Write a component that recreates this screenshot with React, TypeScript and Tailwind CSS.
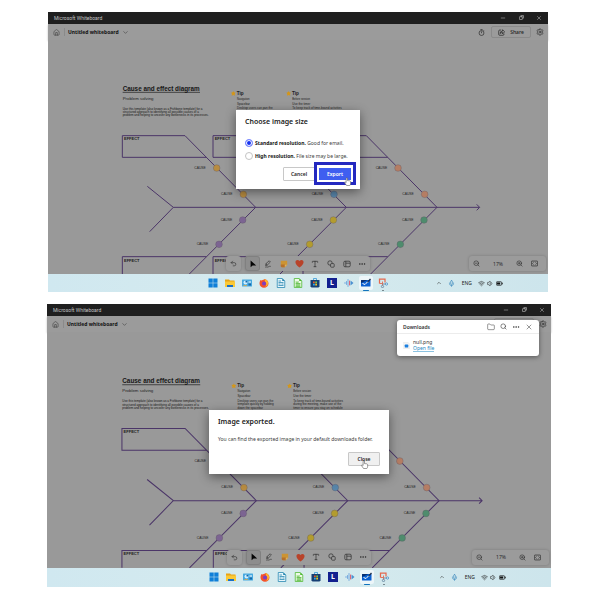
import type { ReactNode } from "react";
import {
  ChevronDown,
  ChevronUp,
  Copy,
  Ellipsis,
  Folder,
  House,
  Mic,
  Minus,
  Search,
  Settings,
  Type,
  Undo2,
  Volume1,
  Wifi,
  X,
  ZoomIn,
  ZoomOut,
} from "lucide-react";

/* ---------- Fishbone canvas ---------- */

const LINE = "#4b3568";

const branches = [
  { box: 223, joint: 623, upper: "#b88c40", lower: "#7c6492" },
  { box: 495, joint: 895, upper: "#5886ab", lower: "#b39c2e" },
  { box: 765, joint: 1167, upper: "#b57d64", lower: "#4e8c6d" },
];

const causes = [
  { dx: -117, y: 384, label: -67, top: true },
  { dx: -37, y: 463, label: -67, top: true },
  { dx: -39, y: 540, label: -66, top: false },
  { dx: -110, y: 613, label: -67, top: false },
];

function Branch({ box, joint, upper, lower }: (typeof branches)[number]) {
  return (
    <g>
      <path
        d={`M${joint - 148} 352H${box}V287H${joint - 212}L${joint} 502L${joint - 199} 702M${box} 702V650H${joint - 148}`}
        fill="none"
        stroke={LINE}
        strokeWidth="3"
      />
      {[300, 665].map((y) => (
        <text key={y} x={box + 5} y={y} fontSize="12" fontWeight="700" fill="#1c1c1c">
          EFFECT
        </text>
      ))}
      {causes.map((c) => (
        <g key={c.y}>
          <circle
            cx={joint + c.dx}
            cy={c.y}
            r="10"
            fill={c.top ? upper : lower}
            stroke="#5d5560"
            strokeWidth="1"
          />
          <text x={joint + c.dx + c.label} y={c.y + 2} fontSize="10" fill="#1f1f1f">
            CAUSE
          </text>
        </g>
      ))}
    </g>
  );
}

function Tip({ x, lines }: { x: number; lines: string[] }) {
  const rows = [180, 194, 208, 218, 228];
  return (
    <g>
      <path
        d={`M${x} 153l2 4 5 1-3 4 1 5-5-2-5 2 1-5-3-4 5-1z`}
        fill="#d3961a"
      />
      <text x={x + 10} y="164" fontSize="14" fontWeight="700" fill="#1c1c1c">
        Tip
      </text>
      {lines.map((l, i) => (
        <text key={l} x={x + 11} y={rows[i]} fontSize={i === 0 ? 8 : 9} fill="#1c1c1c">
          {l}
        </text>
      ))}
    </g>
  );
}

function Fishbone() {
  return (
    <svg
      viewBox="0 0 1500 702"
      className="block w-full bg-[#999] font-['Liberation_Sans',sans-serif]"
      role="img"
      aria-label="Cause and effect diagram"
    >
      <text x="224" y="152" fontSize="19" fontWeight="700" fill="#161616">
        Cause and effect diagram
      </text>
      <path d="M224 157H456" stroke="#161616" strokeWidth="2" />
      <text x="224" y="179" fontSize="13" fill="#222">
        Problem solving
      </text>
      <g fontSize="9" fill="#161616">
        <text x="224" y="209">Use this template (also known as a Fishbone template) for a</text>
        <text x="224" y="219">structured approach to identifying all possible causes of a</text>
        <text x="224" y="229">problem and helping to uncover any bottlenecks in its processes.</text>
      </g>
      <Tip
        x={556}
        lines={[
          "Navigation",
          "Spacebar",
          "Desktop users can pan the",
          "template quickly by holding",
          "down the spacebar",
        ]}
      />
      <Tip
        x={722}
        lines={[
          "Before session",
          "Use the timer",
          "To keep track of time-bound activities",
          "during the meeting, make use of the",
          "timer to ensure you stay on schedule",
        ]}
      />
      <path
        d="M298 439L376 502L305 575M376 502H1294M1286 493L1295 502L1286 511"
        fill="none"
        stroke={LINE}
        strokeWidth="3"
      />
      {branches.map((b) => (
        <Branch key={b.box} {...b} />
      ))}
    </svg>
  );
}

/* ---------- Floating tools ---------- */

function ToolButton({
  label,
  active,
  children,
}: {
  label: string;
  active?: boolean;
  children: ReactNode;
}) {
  return (
    <button
      aria-label={label}
      className={
        active
          ? "flex size-[13px] items-center justify-center rounded-xs bg-[#8d8d8d] ring-1 ring-[#808080]"
          : "flex size-[13px] items-center justify-center"
      }
    >
      {children}
    </button>
  );
}

const panel =
  "flex h-[15px] items-center rounded-[3px] bg-[#9b9b9b] text-[#2b2b2b] shadow-[0_0_3px_rgba(0,0,0,0.22)]";

function FloatingTools() {
  return (
    <>
      <div className="absolute inset-x-0 bottom-[3px] flex justify-center gap-1">
        <div className={`${panel} px-px`}>
          <ToolButton label="Undo">
            <Undo2 size={7} />
          </ToolButton>
        </div>
        <div className={`${panel} w-[125px] justify-between px-px`}>
          <ToolButton label="Select" active>
            <svg viewBox="0 0 20 20" className="size-2">
              <path d="M4 1v17l5-4.500h9z" fill="#050505" />
            </svg>
          </ToolButton>
          <ToolButton label="Pen">
            <svg viewBox="0 0 20 20" className="size-2" fill="none" stroke="currentColor" strokeWidth="1.600">
              <path d="M4 14l1-5 8-7 3 3-8 8zM5 9l3 4M3 18c3-2 5 1 8-1s4-1 6-1" />
            </svg>
          </ToolButton>
          <ToolButton label="Sticky note">
            <svg viewBox="0 0 20 20" className="size-2">
              <path d="M2 2h16v10l-6 6H5l-3-3z" fill="#cc9433" />
              <path d="M2 11h10v7H4l-2-2z" fill="#b5702a" />
              <path d="M12 18v-6h6z" fill="#d9b060" />
            </svg>
          </ToolButton>
          <ToolButton label="Reactions">
            <svg viewBox="0 0 20 20" className="size-[9px]">
              <path d="M10 19C3 14 1 10 1 6.500C1 2 7 0 10 4.500C13 0 19 2 19 6.500C19 10 17 14 10 19z" fill="#b8432a" />
            </svg>
          </ToolButton>
          <ToolButton label="Text">
            <Type size={8} />
          </ToolButton>
          <ToolButton label="Shapes">
            <svg viewBox="0 0 20 20" className="size-2" fill="none" stroke="currentColor" strokeWidth="1.700">
              <circle cx="7.500" cy="7.500" r="5.500" />
              <rect x="9" y="9" width="9" height="9" rx="2" fill="#9b9b9b" />
            </svg>
          </ToolButton>
          <ToolButton label="Templates">
            <svg viewBox="0 0 20 20" className="size-2" fill="none" stroke="currentColor" strokeWidth="1.700">
              <rect x="2" y="3" width="16" height="14" rx="3" />
              <path d="M7 3v14M7 8h11" />
            </svg>
          </ToolButton>
          <ToolButton label="More">
            <Ellipsis size={8} />
          </ToolButton>
        </div>
      </div>
      <div className={`${panel} absolute right-[2px] bottom-[3px] gap-[2px] pr-[5px] pl-px`}>
        <ToolButton label="Zoom out">
          <ZoomOut size={7} />
        </ToolButton>
        <button className="w-[26px] text-center text-[5px] leading-[8px]">17%</button>
        <ToolButton label="Zoom in">
          <ZoomIn size={7} />
        </ToolButton>
        <ToolButton label="Fit to screen">
          <svg viewBox="0 0 20 20" className="size-[7px]" fill="none" stroke="currentColor" strokeWidth="2">
            <rect x="1" y="3" width="18" height="14" rx="2" />
            <path d="M7 7l-3 3 3 3M13 7l3 3-3 3" />
          </svg>
        </ToolButton>
      </div>
    </>
  );
}

/* ---------- Taskbar ---------- */

const glyph = "size-[10px]";

const apps: { name: string; art: ReactNode; state?: "active" | "open" }[] = [
  {
    name: "Start",
    art: (
      <svg viewBox="0 0 20 20" className={glyph} fill="#0f7fd8">
        <path d="M1 1h8.500v8.500H1zM10.500 1H19v8.500h-8.500zM1 10.500h8.500V19H1zM10.500 10.500H19V19h-8.500z" />
      </svg>
    ),
  },
  {
    name: "File Explorer",
    art: (
      <svg viewBox="0 0 20 20" className={glyph}>
        <path d="M0 3h8l2 2h9v13H0z" fill="#e8a317" />
        <path d="M0 7h20v11H0z" fill="#fbc936" />
        <path d="M4 14h12v4H4z" fill="#1c6fc4" />
      </svg>
    ),
  },
  {
    name: "Control Panel",
    art: (
      <svg viewBox="0 0 20 20" className={glyph}>
        <rect x="0" y="3" width="20" height="14" rx="1" fill="#48a9e0" />
        <circle cx="7" cy="9" r="4" fill="#cfeeff" />
        <path d="M7 9V5a4 4 0 0 1 4 4z" fill="#1767a8" />
        <path d="M13 7h5v2h-5z" fill="#fff" />
        <path d="M13 11h5v4h-5z" fill="#1767a8" />
        <path d="M3 14h7v1.500H3z" fill="#e7a93a" />
      </svg>
    ),
  },
  {
    name: "Firefox",
    art: (
      <svg viewBox="0 0 20 20" className={glyph}>
        <path d="M3 4l2 1c3-2 5-1 6-3c4 1 8 4 8 9a9 8.500 0 0 1-18 0c0-3 1-5 2-7z" fill="#f4512c" />
        <path d="M11 2c5 1 8 5 7 10c-1 3-3 5-6 6c4-4 3-9 0-11c0-2-1-3-1-5z" fill="#ffb52b" />
        <circle cx="10" cy="11" r="4" fill="#7a3fc4" />
      </svg>
    ),
  },
  {
    name: "Writer",
    art: (
      <svg viewBox="0 0 20 20" className={glyph}>
        <path d="M2.500 1h10l5 5v13h-15z" fill="#e9f6fb" stroke="#1f83ad" strokeWidth="1.500" />
        <path d="M12.500 1v5h5z" fill="#1f83ad" />
        <path d="M5 6h5M5 9h10M5 12h4M5 15h10M11 12h4" stroke="#1f83ad" strokeWidth="1.500" />
      </svg>
    ),
  },
  {
    name: "Calc",
    art: (
      <svg viewBox="0 0 20 20" className={glyph}>
        <path d="M2.500 1h10l5 5v13h-15z" fill="#ecfae6" stroke="#49b52c" strokeWidth="1.500" />
        <path d="M12.500 1v5h5z" fill="#49b52c" />
        <path d="M5 8h7M5 11h10M5 14h10M5 17h10M8 8v9M12 10v7" stroke="#49b52c" strokeWidth="1.300" />
      </svg>
    ),
  },
  {
    name: "Microsoft Store",
    art: (
      <svg viewBox="0 0 20 20" className={glyph}>
        <path d="M7 5V1h6v4" fill="none" stroke="#2f94d6" strokeWidth="1.500" />
        <path d="M1 4h18v13l-2 2H3l-2-2z" fill="#163f74" />
        <path d="M6 7h3.500v3.500H6z" fill="#f05a28" />
        <path d="M10.500 7H14v3.500h-3.500z" fill="#80c342" />
        <path d="M6 11.500h3.500V15H6z" fill="#2fa9e8" />
        <path d="M10.500 11.500H14V15h-3.500z" fill="#fbc21a" />
      </svg>
    ),
  },
  {
    name: "L",
    art: (
      <span className="flex size-[10px] items-center justify-center bg-[#12208f] text-[7px] leading-[10px] font-bold text-white">
        L
      </span>
    ),
  },
  {
    name: "Sound Recorder",
    art: (
      <svg viewBox="0 0 20 20" className={glyph} strokeWidth="1.800" strokeLinecap="round">
        <path d="M2 9v2M5 7v6M8 3v14" stroke="#6fa6dc" />
        <path d="M11 6v8" stroke="#e0566a" />
        <path d="M13 5l6 5-6 5z" fill="#4b8fd0" />
      </svg>
    ),
  },
  {
    name: "Whiteboard",
    state: "active",
    art: (
      <svg viewBox="0 0 20 20" className={glyph}>
        <rect x="0" y="4" width="19" height="13" rx="1" fill="#0b5fd0" />
        <path d="M0 10V5q0-1 1-1h12z" fill="#0a2f70" />
        <path d="M3 11l5 2c3-4 5-5 8-6" fill="none" stroke="#fff" strokeWidth="2" />
        <path d="M12 8l6-7 2 2-6 6z" fill="#1b2c4a" />
      </svg>
    ),
  },
  {
    name: "Snipping Tool",
    state: "open",
    art: (
      <svg viewBox="0 0 20 20" className={glyph}>
        <path d="M3 11V2h11v7" fill="none" stroke="#e4694e" strokeWidth="2.500" />
        <path d="M3 11h6M9 7v8" fill="none" stroke="#e4694e" strokeWidth="1.800" />
        <path d="M9 12h6" stroke="#6b8298" strokeWidth="1.800" />
        <circle cx="9" cy="17" r="2.300" fill="none" stroke="#5d7f9c" strokeWidth="1.600" />
        <circle cx="17" cy="12" r="2.300" fill="none" stroke="#4b94cc" strokeWidth="1.600" />
      </svg>
    ),
  },
];

function Taskbar({ height }: { height: string }) {
  return (
    <footer
      className={`${height} grid grid-cols-[1fr_auto_1fr] items-center bg-linear-to-r from-[#d0e8f0] via-[#d6ebee] to-[#cde5ec] text-[#222]`}
    >
      <span />
      <nav aria-label="Taskbar" className="flex gap-[3px]">
        {apps.map((app) => (
          <button
            key={app.name}
            aria-label={app.name}
            className={
              app.state === "active"
                ? "relative flex size-[14px] items-center justify-center rounded-xs bg-[#edf6f9]"
                : "relative flex size-[14px] items-center justify-center"
            }
          >
            {app.art}
            {app.state === "active" && (
              <span className="absolute inset-x-1 -bottom-px h-px rounded-full bg-[#1273bd]" />
            )}
            {app.state === "open" && (
              <span className="absolute inset-x-[6px] -bottom-px h-px rounded-full bg-[#6d7b82]" />
            )}
          </button>
        ))}
      </nav>
      <div className="flex items-center justify-end pr-[45px]">
        <ChevronUp size={6} className="mr-[6px]" />
        <Mic size={7} className="mr-[7px] text-[#2b7fb8]" />
        <span className="mr-[6px] text-[5px] leading-[8px]">ENG</span>
        <Wifi size={7} className="mr-[2px]" />
        <Volume1 size={7} className="mr-[2px]" />
        <svg viewBox="0 0 20 20" className="size-[7px]">
          <rect x="1" y="5" width="15" height="10" rx="2" fill="none" stroke="#111" strokeWidth="2" />
          <path d="M3 7h9v6H3zM17 8h2v4h-2z" fill="#111" />
        </svg>
      </div>
    </footer>
  );
}

/* ---------- Window ---------- */

function AppWindow({
  className,
  taskbarHeight,
  children,
}: {
  className: string;
  taskbarHeight: string;
  children: ReactNode;
}) {
  return (
    <section className={className}>
      <div className="flex h-3 items-center justify-between bg-[#1f1f1f] pr-[5px] pl-[6px] text-[#c4c4c4]">
        <h1 className="font-['Roboto',sans-serif] text-[5px] leading-[8px]">Microsoft Whiteboard</h1>
        <div className="flex gap-[10px]">
          <button aria-label="Minimize" className="flex w-2 justify-center">
            <Minus size={6} />
          </button>
          <button aria-label="Restore" className="flex w-2 justify-center">
            <Copy size={5} strokeWidth={3} className="-scale-x-100" />
          </button>
          <button aria-label="Close window" className="flex w-2 justify-center">
            <X size={6} />
          </button>
        </div>
      </div>
      <div className="relative">
        <header className="relative flex h-4 items-center bg-[#9b9b9b] pr-[4px] pl-[5px] text-[#222] shadow-[0_1px_2px_rgba(0,0,0,0.25)]">
          <button aria-label="Home">
            <House size={7} strokeWidth={1.500} />
          </button>
          <span className="ml-[4px] h-2 w-px bg-[#8a8a8a]" />
          <button className="ml-[3px] flex items-center gap-[3px]">
            <span className="text-[5px] leading-[8px] font-bold text-[#111]">Untitled whiteboard</span>
            <ChevronDown size={7} strokeWidth={1.500} />
          </button>
          <button aria-label="Timer" className="ml-auto">
            <svg viewBox="0 0 20 20" className="size-[7px]" fill="none" stroke="currentColor" strokeWidth="1.800">
              <circle cx="10" cy="11.500" r="7" />
              <path d="M7 1.500h6M10 7v5M16 4l2 2" />
            </svg>
          </button>
          <button className="ml-[6px] flex h-3 w-[40px] items-center justify-center gap-[5px] rounded-xs border border-[#8a8a8a] text-[5px] leading-[8px] font-medium">
            <svg viewBox="0 0 20 20" className="size-[7px]" fill="none" stroke="currentColor" strokeWidth="2">
              <path d="M9 3H5q-3 0-3 3v9q0 3 3 3h9q3 0 3-3v-2" />
              <path d="M6 13q0-7 7-7V2l6 6-6 6v-4q-5 0-7 3z" />
            </svg>
            Share
          </button>
          <button aria-label="Settings" className="ml-[5px]">
            <Settings size={8} strokeWidth={1.800} />
          </button>
        </header>
        <main className="relative">
          <Fishbone />
          <FloatingTools />
        </main>
        {children}
      </div>
      <Taskbar height={taskbarHeight} />
    </section>
  );
}

function Dialog({ title, width, children }: { title: string; width: string; children: ReactNode }) {
  return (
    <div className="absolute inset-0 flex items-center justify-center">
      <div
        role="dialog"
        aria-label={title}
        className={`${width} bg-white px-[9px] pt-[6px] pb-2 text-[#3b3b3b] shadow-[0_3px_10px_rgba(0,0,0,0.45)]`}
      >
        <h2 className="text-[7px] leading-[12px] font-semibold text-[#222]">{title}</h2>
        {children}
      </div>
    </div>
  );
}

function HandCursor() {
  return (
    <svg viewBox="0 0 20 20" className="pointer-events-none absolute -right-px -bottom-[5px] size-[9px]">
      <path
        d="M7 11V2.500q1.500-2 3 0V8q6 0 7 2v4q0 3-2 5H8L3 12q1-2 4 0z"
        fill="#fff"
        stroke="#555"
        strokeWidth="1.300"
      />
    </svg>
  );
}

function Resolution({ id, name, note, checked }: { id: string; name: string; note: string; checked?: boolean }) {
  return (
    <div className="flex h-[13px] items-center gap-[2px]">
      <input
        id={id}
        type="radio"
        name="resolution"
        defaultChecked={checked}
        className="size-2 appearance-none rounded-full border border-[#c4c4c4] checked:border-[#8290ff] checked:bg-[#1430f0] checked:shadow-[inset_0_0_0_1px_white]"
      />
      <label htmlFor={id} className="text-[5px] leading-[8px] whitespace-nowrap">
        <b className="font-bold text-[#161616]">{name}</b> {note}
      </label>
    </div>
  );
}

function Downloads() {
  return (
    <aside
      aria-label="Downloads"
      className="absolute top-1 right-3 w-[142px] rounded-[3px] bg-white text-[#333] shadow-[0_1px_5px_rgba(0,0,0,0.45)]"
    >
      <div className="flex h-[14px] items-center border-b border-[#ececec] px-[6px]">
        <h2 className="mr-auto text-[5px] leading-[8px] font-semibold">Downloads</h2>
        <div className="flex gap-[5px]">
          <button aria-label="Open downloads folder">
            <Folder size={8} strokeWidth={1.500} />
          </button>
          <button aria-label="Search downloads">
            <Search size={7} />
          </button>
          <button aria-label="More options">
            <Ellipsis size={8} />
          </button>
          <button aria-label="Close downloads">
            <X size={8} strokeWidth={1.500} />
          </button>
        </div>
      </div>
      <div className="flex h-[22px] items-center gap-[3px] px-[6px]">
        <svg viewBox="0 0 20 20" className="size-[7px]">
          <path d="M2 0h11l5 5v15H2z" fill="#f4f4f4" stroke="#d5d5d5" />
          <rect x="5" y="7" width="10" height="9" rx="2" fill="#1b7fe0" />
        </svg>
        <div className="flex flex-col items-start text-[5px] leading-[6px]">
          <span>null.png</span>
          <a href="#null.png" className="border-b border-[#8cc3e2] text-[#2387bf]">
            Open file
          </a>
        </div>
      </div>
    </aside>
  );
}

const outlined =
  "h-[14px] w-[32px] rounded-[1px] border border-[#c8c8c8] text-center text-[5px] leading-[8px] font-semibold text-[#222]";

export default function App() {
  return (
    <div className="flex flex-col gap-3 bg-white py-3 font-['Noto_Sans','Open_Sans',sans-serif]">
      <AppWindow className="mr-[52px] ml-12" taskbarHeight="h-[18px]">
        <Dialog title="Choose image size" width="w-[124px]">
          <fieldset aria-label="Resolution" className="mt-[9px]">
            <Resolution id="standard" name="Standard resolution." note="Good for email." checked />
            <Resolution id="high" name="High resolution." note="File size may be large." />
          </fieldset>
          <div className="mt-1 flex justify-end gap-1">
            <button className={`${outlined} bg-white`}>Cancel</button>
            <div className="relative flex items-center">
              <span className="absolute -inset-x-[5px] -top-[5px] -bottom-1 border-3 border-[#2429c0] bg-white" />
              <button className="relative h-3 w-[32px] bg-[#3f5ef0] text-[5px] leading-[8px] font-semibold text-white">
                Export
              </button>
              <HandCursor />
            </div>
          </div>
        </Dialog>
      </AppWindow>
      <AppWindow className="mr-[49px] ml-[47px]" taskbarHeight="h-[19px]">
        <Downloads />
        <Dialog title="Image exported." width="w-[180px]">
          <p className="mt-[7px] text-[5px] leading-[8px] whitespace-nowrap">
            You can find the exported image in your default downloads folder.
          </p>
          <div className="mt-[9px] flex justify-end">
            <div className="relative flex">
              <button className={`${outlined} bg-[#f0f0f0]`}>Close</button>
              <span className="absolute right-3 bottom-[2px]">
                <HandCursor />
              </span>
            </div>
          </div>
        </Dialog>
      </AppWindow>
    </div>
  );
}
